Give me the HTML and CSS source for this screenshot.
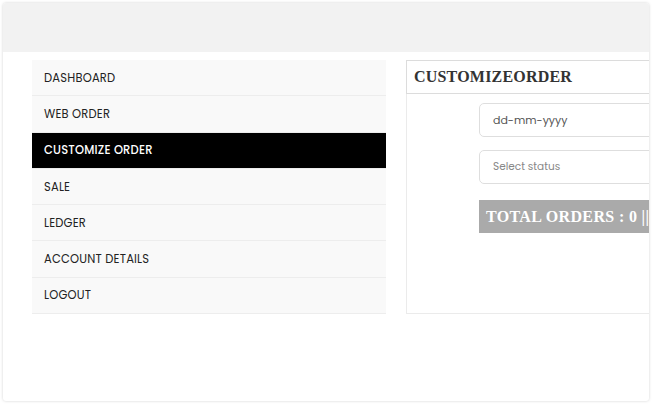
FILE: index.html
```html
<!DOCTYPE html>
<html lang="en">
<head>
    <meta charset="UTF-8">
    <meta name="viewport" content="width=device-width, initial-scale=1.0">
    <title>Customize Order</title>
    <link rel="stylesheet" href="styles.css">
</head>
<body>
    <div class="page">
        <!-- Top Band -->
        <div class="top-band"></div>

        <!-- Account Area -->
        <div class="account">
            <ul class="side-menu">
                <li><a href="#">Dashboard</a></li>
                <li><a href="#">Web Order</a></li>
                <li class="active"><a href="#">Customize Order</a></li>
                <li><a href="#">Sale</a></li>
                <li><a href="#">Ledger</a></li>
                <li><a href="#">Account Details</a></li>
                <li><a href="#">Logout</a></li>
            </ul>

            <div class="panel">
                <h2 class="panel-title">CUSTOMIZEORDER</h2>
                <div class="filters">
                    <div class="field">dd-mm-yyyy</div>
                    <div class="field placeholder">Select status</div>
                    <div class="totals">TOTAL ORDERS : 0 ||</div>
                </div>
            </div>
        </div>
    </div>
</body>
</html>
```

FILE: styles.css
```css
/* Basic Reset */
* {
    box-sizing: border-box;
    margin: 0;
    padding: 0;
}

body {
    font-family: "Poppins", Inter, "Open Sans", sans-serif;
    background: #fff;
    overflow: hidden;
}

/* Outer frame */
.page {
    margin: 3px;
    height: 398px;
    border-radius: 3px;
    box-shadow: 0 0 3px rgba(0, 0, 0, 0.18);
    overflow: hidden;
    background: #fff;
}

.top-band {
    height: 49px;
    background-color: #f2f2f2;
}

.account {
    display: flex;
    align-items: flex-start;
    gap: 20px;
    padding: 8px 0 0 29px;
}

/* Side Menu */
.side-menu {
    list-style: none;
    width: 354px;
    flex-shrink: 0;
}

.side-menu li {
    height: 36.3px;
    background-color: #f9f9f9;
    border-bottom: 1px solid #ededed;
    display: flex;
    align-items: center;
}

.side-menu a {
    display: block;
    padding: 1px 0 0 12px;
    color: #222;
    text-decoration: none;
    text-transform: uppercase;
    font-size: 11.5px;
    font-weight: 400;
    letter-spacing: 0.2px;
}

.side-menu li.active {
    background-color: #000;
}

.side-menu li.active a {
    color: #fff;
    font-weight: 500;
}

/* Panel */
.panel {
    width: 420px;
    flex-shrink: 0;
    height: 254px;
    border: 1px solid #ebebeb;
}

.panel-title {
    height: 34px;
    margin: -1px 0 0 -1px;
    border: 1px solid #dcdcdc;
    padding-left: 7px;
    display: flex;
    align-items: center;
    font-family: "Liberation Serif", serif;
    font-size: 16px;
    font-weight: bold;
    color: #333;
    letter-spacing: 0.2px;
}

.filters {
    padding: 9px 0 0 72px;
}

.field {
    height: 34px;
    border: 1px solid #dedede;
    border-radius: 5px;
    padding-left: 13px;
    display: flex;
    align-items: center;
    font-size: 11px;
    color: #555;
    margin-bottom: 13px;
}

.field.placeholder {
    color: #888;
    font-size: 10.5px;
}

.totals {
    margin-top: 16px;
    height: 33px;
    background-color: #aaaaaa;
    color: #fff;
    padding-left: 7px;
    display: flex;
    align-items: center;
    white-space: nowrap;
    font-family: "Liberation Serif", serif;
    font-size: 16px;
    font-weight: bold;
    letter-spacing: 0.35px;
}
```
